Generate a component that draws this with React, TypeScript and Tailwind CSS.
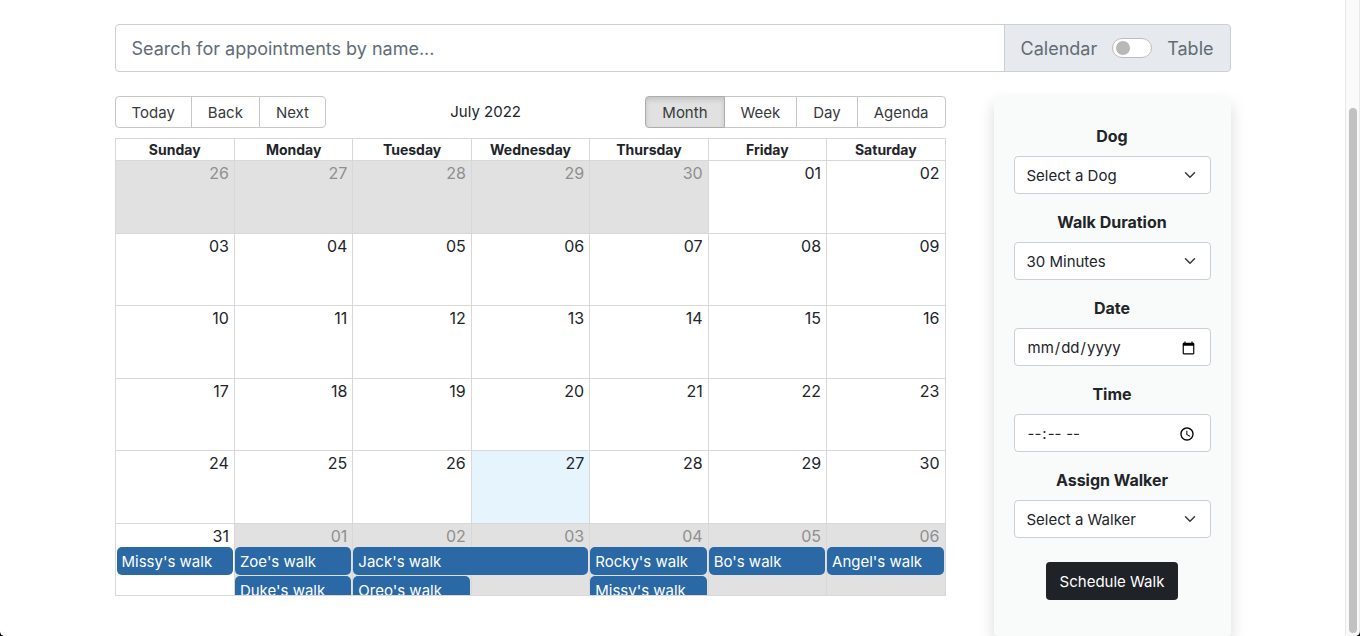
import { useId, useState } from "react";
import type { ReactNode } from "react";

const columns = [
  "col-start-1",
  "col-start-2",
  "col-start-3",
  "col-start-4",
  "col-start-5",
  "col-start-6",
  "col-start-7",
];

const weekdays = ["Sunday", "Monday", "Tuesday", "Wednesday", "Thursday", "Friday", "Saturday"];

const weeks = [
  ["26", "27", "28", "29", "30", "01", "02"],
  ["03", "04", "05", "06", "07", "08", "09"],
  ["10", "11", "12", "13", "14", "15", "16"],
  ["17", "18", "19", "20", "21", "22", "23"],
  ["24", "25", "26", "27", "28", "29", "30"],
  ["31", "01", "02", "03", "04", "05", "06"],
];

type Walk = { title: string; place: string };

const walks: Walk[] = [
  { title: "Missy's walk", place: "col-start-1 row-start-2" },
  { title: "Zoe's walk", place: "col-start-2 row-start-2" },
  { title: "Jack's walk", place: "col-start-3 col-span-2 row-start-2" },
  { title: "Rocky's walk", place: "col-start-5 row-start-2" },
  { title: "Bo's walk", place: "col-start-6 row-start-2" },
  { title: "Angel's walk", place: "col-start-7 row-start-2" },
  { title: "Duke's walk", place: "col-start-2 row-start-3" },
  { title: "Oreo's walk", place: "col-start-3 row-start-3" },
  { title: "Missy's walk", place: "col-start-5 row-start-3" },
];

function isOffRange(week: number, day: number) {
  return (week === 0 && day < 5) || (week === 5 && day > 0);
}

function ButtonGroup({ labels, active }: { labels: string[]; active?: string }) {
  return (
    <div className="flex">
      {labels.map((label) => (
        <button
          key={label}
          type="button"
          className={
            "-ml-px h-8 border px-4 pt-0.5 text-[15px] leading-5 text-[#373a3c] first:ml-0 first:rounded-l last:rounded-r " +
            (label === active
              ? "z-10 border-[#adadad] bg-[#e1e1e1] shadow-[inset_0_3px_5px_rgba(0,0,0,0.125)]"
              : "border-[#c6c6c6] bg-white")
          }
        >
          {label}
        </button>
      ))}
    </div>
  );
}

function Week({ days, index }: { days: string[]; index: number }) {
  return (
    <div
      role="row"
      className="grid min-h-0 flex-1 basis-0 grid-cols-7 grid-rows-[23px_29px_29px] overflow-hidden border-t border-[#d8d8d8]"
    >
      {days.map((day, i) => {
        const off = isOffRange(index, i);
        const today = index === 4 && i === 3;
        return (
          <div
            key={i}
            role="gridcell"
            className={
              "row-span-3 row-start-1 border-l border-[#d8d8d8] pr-[5px] text-right text-base leading-6 first:border-l-0 " +
              columns[i] +
              (off ? " bg-[#e1e1e1] text-[#8f8f8f]" : today ? " bg-[#e6f4fe]" : "")
            }
          >
            {day}
          </div>
        );
      })}
      {index === 5 &&
        walks.map((walk) => (
          <button
            key={walk.title + walk.place}
            type="button"
            className={
              "mx-px mb-px truncate rounded-[5px] bg-[#2a69a6] px-[5px] pt-0.5 text-left text-[15px] leading-6 text-white " +
              walk.place
            }
          >
            {walk.title}
          </button>
        ))}
    </div>
  );
}

function Calendar() {
  return (
    <section aria-label="Walk calendar" className="flex h-[500px] min-w-0 flex-1 flex-col">
      <div className="mb-2.5 flex h-8 items-center">
        <ButtonGroup labels={["Today", "Back", "Next"]} />
        <span className="grow px-2.5 text-center text-[15px] leading-6">July 2022</span>
        <ButtonGroup labels={["Month", "Week", "Day", "Agenda"]} active="Month" />
      </div>
      <div role="grid" aria-label="July 2022" className="flex min-h-0 flex-1 flex-col border border-[#d8d8d8]">
        <div role="row" className="grid grid-cols-7">
          {weekdays.map((day) => (
            <div
              key={day}
              role="columnheader"
              className="border-l border-[#d8d8d8] text-center text-sm leading-[21px] font-bold first:border-l-0"
            >
              {day}
            </div>
          ))}
        </div>
        {weeks.map((days, i) => (
          <Week key={i} days={days} index={i} />
        ))}
      </div>
    </section>
  );
}

const controlStyle =
  "block h-[38px] w-full rounded border border-[#c9cfd8] bg-white px-3 pt-0.5 text-[15px] leading-6 text-[#212529]";

function Field({ label, children }: { label: string; children: (id: string) => ReactNode }) {
  const id = useId();
  return (
    <div className="mb-4">
      <label htmlFor={id} className="mb-2 block text-center text-base leading-6 font-bold">
        {label}
      </label>
      {children(id)}
    </div>
  );
}

function SelectField({ label, options }: { label: string; options: string[] }) {
  return (
    <Field label={label}>
      {(id) => (
        <div className="relative">
          <select id={id} className={controlStyle + " appearance-none"}>
            {options.map((option) => (
              <option key={option}>{option}</option>
            ))}
          </select>
          <svg
            viewBox="0 0 16 16"
            className="pointer-events-none absolute top-[13px] right-[15px] size-3"
            fill="none"
            stroke="#343a40"
            strokeWidth="2"
            strokeLinecap="round"
            strokeLinejoin="round"
            aria-hidden="true"
          >
            <path d="m2 5 6 6 6-6" />
          </svg>
        </div>
      )}
    </Field>
  );
}

function ScheduleForm() {
  return (
    <form
      className="w-[237px] shrink-0 rounded bg-[#f9fbfa] px-5 pt-7 pb-9 shadow-[0_8px_16px_rgba(0,0,0,0.15)]"
      onSubmit={(e) => e.preventDefault()}
    >
      <SelectField label="Dog" options={["Select a Dog", "Missy", "Zoe", "Jack", "Rocky"]} />
      <SelectField label="Walk Duration" options={["30 Minutes", "60 Minutes"]} />
      <Field label="Date">{(id) => <input id={id} type="date" className={controlStyle} />}</Field>
      <Field label="Time">{(id) => <input id={id} type="time" className={controlStyle} />}</Field>
      <SelectField label="Assign Walker" options={["Select a Walker"]} />
      <button
        type="submit"
        className="mx-auto mt-6 block h-[38px] rounded bg-[#1f2227] px-3.5 pt-0.5 text-[15px] leading-6 text-white"
      >
        Schedule Walk
      </button>
    </form>
  );
}

function SearchBar() {
  const [table, setTable] = useState(false);
  return (
    <div className="flex h-12">
      <input
        type="text"
        aria-label="Search for appointments by name"
        placeholder="Search for appointments by name..."
        className="min-w-0 flex-1 rounded-l border border-[#c9cfd8] bg-white px-4 pt-0.5 text-lg leading-[30px] placeholder:text-[#626c75]"
      />
      <div className="-ml-px flex items-center rounded-r border border-[#c9cfd8] bg-[#e6e9ee] px-4 text-lg leading-[30px] text-[#626c75]">
        <span className="pt-0.5">Calendar</span>
        <input
          type="checkbox"
          role="switch"
          aria-label="Table view"
          checked={table}
          onChange={(e) => setTable(e.target.checked)}
          className="mx-[15px] flex h-5 w-10 appearance-none items-center rounded-full border border-[#bdbdbd] bg-white px-[3px] before:size-3.5 before:rounded-full before:bg-[#b8b8b8] checked:justify-end"
        />
        <span className="pt-0.5">Table</span>
      </div>
    </div>
  );
}

function Corner({ className }: { className: string }) {
  return (
    <svg viewBox="0 0 5 5" className={"absolute bottom-0 size-[5px] " + className} aria-hidden="true">
      <path d="M0 0C0 3 2 5 5 5H0Z" fill="#000" />
    </svg>
  );
}

export default function App() {
  return (
    <div className="relative flex min-h-screen overflow-hidden bg-white font-[Inter,'Liberation_Sans',sans-serif] text-[#212529]">
      <main className="min-w-0 flex-1">
        <div className="mx-auto max-w-[1140px] px-3 pt-6">
          <SearchBar />
          <div className="mt-6 flex items-start gap-12">
            <Calendar />
            <ScheduleForm />
          </div>
        </div>
      </main>
      <div
        aria-hidden="true"
        className="flex w-[15px] shrink-0 justify-center border-x border-[#e8e8e8] bg-[#fafafa] pt-[108px] pb-[3px]"
      >
        <div className="w-2 rounded-full bg-[#c1c1c1]" />
      </div>
      <Corner className="left-0" />
      <Corner className="right-0 -scale-x-100" />
    </div>
  );
}
